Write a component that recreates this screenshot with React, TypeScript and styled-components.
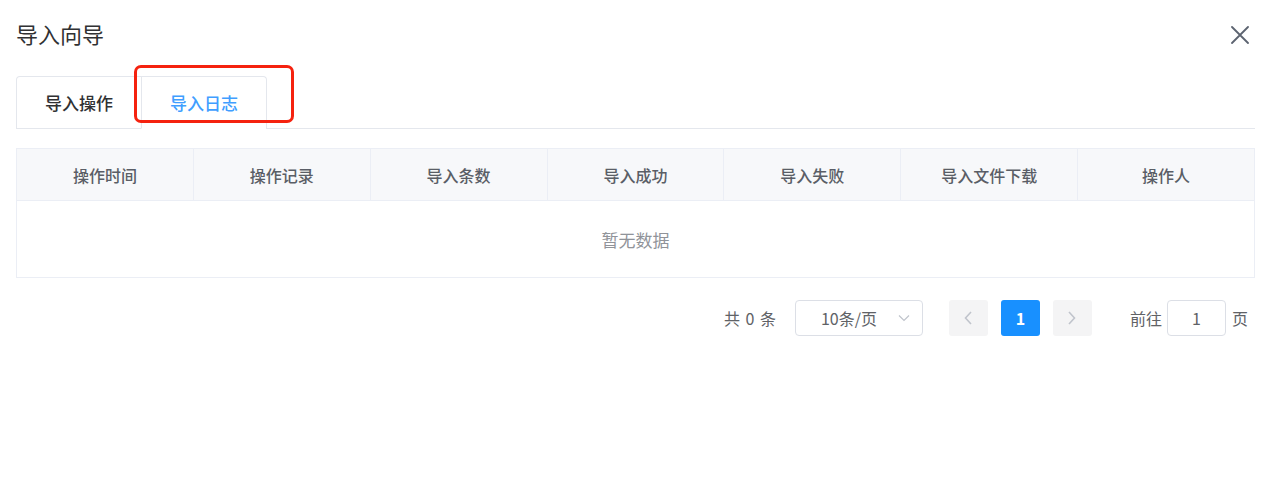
import React from 'react';
import styled, { createGlobalStyle } from 'styled-components';

const GlobalStyle = createGlobalStyle`
  html, body {
    margin: 0;
    padding: 0;
    background: #ffffff;
  }
  body {
    font-family: "Noto Sans CJK SC", "Noto Sans", "Liberation Sans", sans-serif;
    color: #606266;
  }
`;

const columns = ['操作时间', '操作记录', '导入条数', '导入成功', '导入失败', '导入文件下载', '操作人'];

const Dialog = styled.div`
  width: 1280px;
  height: 480px;
  box-sizing: border-box;
  padding: 18px 25px 0 16px;
`;

const Header = styled.div`
  display: flex;
  align-items: center;
  justify-content: space-between;
  height: 30px;
  padding-right: 6px;
`;

const Title = styled.span`
  font-size: 22px;
  line-height: 30px;
  color: #303133;
`;

const CloseButton = styled.button`
  display: flex;
  align-items: center;
  justify-content: center;
  width: 18px;
  height: 18px;
  padding: 0;
  border: none;
  background: none;
  cursor: pointer;
  margin-top: 4px;
`;

const TabsHeader = styled.div`
  position: relative;
  display: flex;
  margin-top: 28px;
  border-bottom: 1px solid #e4e7ed;
`;

const TabNav = styled.div`
  display: flex;
  border: 1px solid #e4e7ed;
  border-bottom: none;
  border-radius: 4px 4px 0 0;
  margin-bottom: -1px;
`;

const TabItem = styled.div<{ $active?: boolean; $first?: boolean }>`
  height: 51px;
  line-height: 51px;
  padding: 0 28px;
  font-size: 17px;
  font-weight: 500;
  color: ${({ $active }) => ($active ? '#409eff' : '#303133')};
  border-left: ${({ $first }) => ($first ? 'none' : '1px solid #e4e7ed')};
  border-bottom: 1px solid ${({ $active }) => ($active ? '#ffffff' : 'transparent')};
  cursor: pointer;
`;

const Highlight = styled.div`
  position: absolute;
  left: 118px;
  top: -11px;
  width: 160px;
  height: 58px;
  box-sizing: border-box;
  border: 3px solid #f5220f;
  border-radius: 7px;
  pointer-events: none;
`;

const Table = styled.table`
  width: 100%;
  margin-top: 19px;
  border-collapse: collapse;
  table-layout: fixed;
  border: 1px solid #ebeef5;
`;

const HeadCell = styled.th`
  height: 51px;
  padding: 0;
  background: #f7f8fa;
  border-right: 1px solid #ebeef5;
  border-bottom: 1px solid #ebeef5;
  font-size: 16px;
  font-weight: 500;
  color: #5a5e66;
  text-align: center;
`;

const EmptyCell = styled.td`
  height: 76px;
  padding: 0;
  text-align: center;
  font-size: 17px;
  color: #909399;
`;

const Pagination = styled.div`
  display: flex;
  align-items: center;
  justify-content: flex-end;
  margin-top: 22px;
  padding-right: 7px;
  font-size: 16px;
  color: #606266;
`;

const Total = styled.span`
  margin-right: 19px;
  word-spacing: 2px;
`;

const SizeSelect = styled.div`
  display: flex;
  align-items: center;
  justify-content: space-between;
  width: 128px;
  height: 36px;
  box-sizing: border-box;
  padding: 0 12px 0 25px;
  border: 1px solid #dcdfe6;
  border-radius: 4px;
  margin-right: 26px;
`;

const PageButton = styled.button<{ $active?: boolean; $last?: boolean }>`
  display: flex;
  align-items: center;
  justify-content: center;
  width: 39px;
  height: 36px;
  margin-right: ${({ $last }) => ($last ? '0' : '13px')};
  padding: 0;
  border: none;
  border-radius: 3px;
  background: ${({ $active }) => ($active ? '#1890ff' : '#f4f4f5')};
  color: ${({ $active }) => ($active ? '#ffffff' : '#c0c4cc')};
  font-family: inherit;
  font-size: 16px;
  font-weight: 700;
  cursor: pointer;
`;

const Jumper = styled.div`
  display: flex;
  align-items: center;
  margin-left: 38px;
  gap: 5px;
`;

const JumpInput = styled.div`
  width: 59px;
  height: 36px;
  box-sizing: border-box;
  border: 1px solid #dcdfe6;
  border-radius: 4px;
  line-height: 34px;
  text-align: center;
  color: #606266;
  margin-right: 1px;
`;

const Chevron = ({ dir }: { dir: 'left' | 'right' | 'down' }) => {
  if (dir === 'down') {
    return (
      <svg width="12" height="8" viewBox="0 0 12 8">
        <polyline points="1,1.5 6,6.5 11,1.5" fill="none" stroke="#c0c4cc" strokeWidth="1.2" />
      </svg>
    );
  }
  const pts = dir === 'left' ? '7,1 1.5,7 7,13' : '1,1 6.5,7 1,13';
  return (
    <svg width="8" height="14" viewBox="0 0 8 14">
      <polyline points={pts} fill="none" stroke="#c0c4cc" strokeWidth="1.6" />
    </svg>
  );
};

export default function App() {
  return (
    <>
      <GlobalStyle />
      <Dialog>
        <Header>
          <Title>导入向导</Title>
          <CloseButton aria-label="关闭">
            <svg width="18" height="18" viewBox="0 0 18 18">
              <path d="M1 1 L17 17 M17 1 L1 17" stroke="#5c6370" strokeWidth="1.8" strokeLinecap="round" />
            </svg>
          </CloseButton>
        </Header>

        <TabsHeader>
          <TabNav>
            <TabItem $first>导入操作</TabItem>
            <TabItem $active>导入日志</TabItem>
          </TabNav>
          <Highlight />
        </TabsHeader>

        <Table>
          <thead>
            <tr>
              {columns.map((c) => (
                <HeadCell key={c}>{c}</HeadCell>
              ))}
            </tr>
          </thead>
          <tbody>
            <tr>
              <EmptyCell colSpan={columns.length}>暂无数据</EmptyCell>
            </tr>
          </tbody>
        </Table>

        <Pagination>
          <Total>共 0 条</Total>
          <SizeSelect>
            <span>10条/页</span>
            <Chevron dir="down" />
          </SizeSelect>
          <PageButton>
            <Chevron dir="left" />
          </PageButton>
          <PageButton $active>1</PageButton>
          <PageButton $last>
            <Chevron dir="right" />
          </PageButton>
          <Jumper>
            <span>前往</span>
            <JumpInput>1</JumpInput>
            <span>页</span>
          </Jumper>
        </Pagination>
      </Dialog>
    </>
  );
}
